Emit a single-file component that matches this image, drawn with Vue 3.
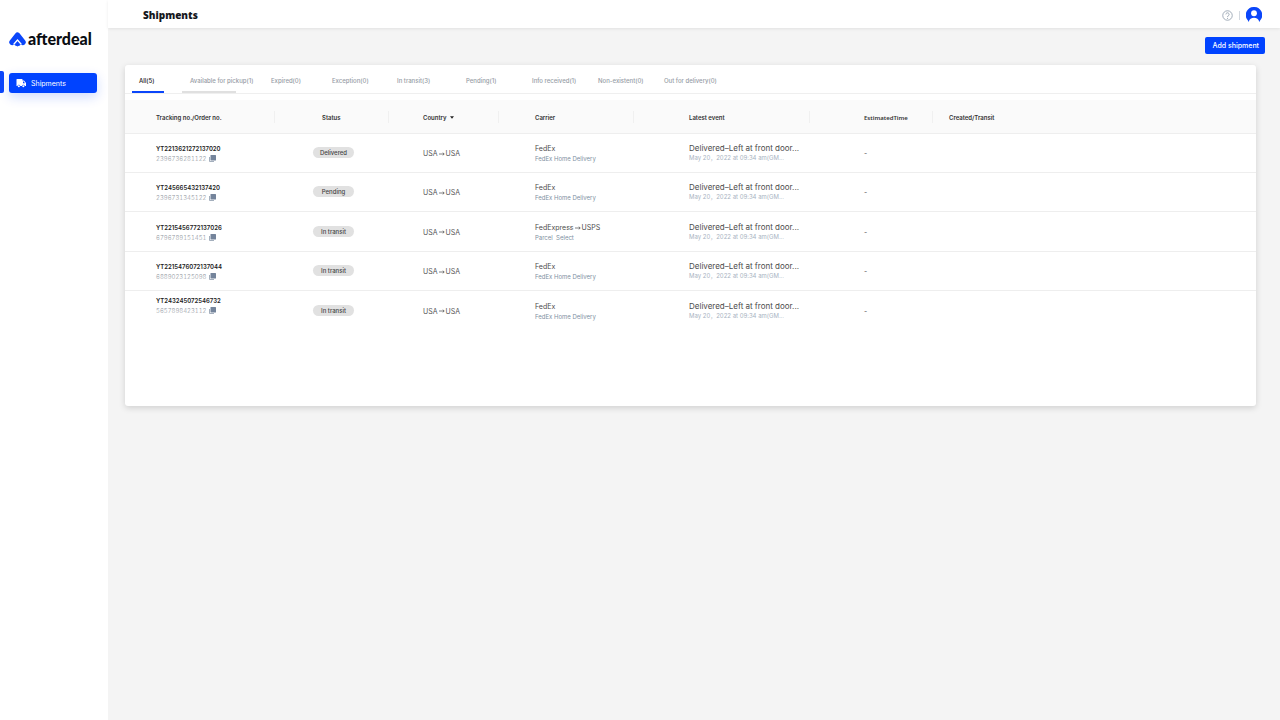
<script setup>
import { ref } from 'vue'

const tabs = [
  'All(5)',
  'Available for pickup(1)',
  'Expired(0)',
  'Exception(0)',
  'In transit(3)',
  'Pending(1)',
  'Info received(1)',
  'Non-existent(0)',
  'Out for delivery(0)',
]
const active = ref(0)

const home = { carrier: 'FedEx', service: 'FedEx Home Delivery' }
const rows = [
  { tracking: 'YT2213621272137020', order: '2396736281122', status: 'Delivered', ...home },
  { tracking: 'YT245665432137420', order: '2396731345122', status: 'Pending', ...home },
  {
    tracking: 'YT2215456772137026',
    order: '6796789151451',
    status: 'In transit',
    carrier: 'FedExpress',
    next: 'USPS',
    service: 'Parcel\u00a0 Select',
  },
  { tracking: 'YT2215476072137044', order: '6889023125098', status: 'In transit', ...home },
  { tracking: 'YT243245072546732', order: '5657898423112', status: 'In transit', ...home },
]
</script>

<template>
  <div class="app">
    <aside class="sidebar">
      <div class="logo">
        <svg class="logo-mark" viewBox="0 0 34 30" aria-hidden="true">
          <path d="M6 20.500 17 6.500 28 20.500" fill="none" stroke="#0b46fa" stroke-width="11" stroke-linecap="round" stroke-linejoin="round" />
          <path d="M9.500 24.500 17 16 24.500 24.500" fill="none" stroke="#fff" stroke-width="2.500" />
          <path d="M17 19 11.500 25.500Q17 30.500 22.500 25.500Z" fill="#0b46fa" stroke="#0b46fa" stroke-width="1.500" stroke-linejoin="round" />
        </svg>
        <span>afterdeal</span>
      </div>
      <nav class="nav">
        <a class="nav-link" href="#shipments">
          <svg class="truck" viewBox="0 0 20 20" aria-hidden="true">
            <path d="M2 2h10a1 1 0 0 1 1 1v2h3l4 5v6h-2.500a2.800 2.800 0 0 0-5.500 0H8.500a2.800 2.800 0 0 0-5.500 0H1V3a1 1 0 0 1 1-1z" fill="#fff" />
            <path d="M14 7v3.500h4L15.500 7z" fill="#0b46fa" />
            <circle cx="5.700" cy="16.500" r="2.100" fill="#fff" />
            <circle cx="14.700" cy="16.500" r="2.100" fill="#fff" />
          </svg>
          Shipments
        </a>
      </nav>
    </aside>

    <div class="body">
      <header class="topbar">
        <h1>Shipments</h1>
        <div class="tools">
          <button class="icon-btn" type="button" aria-label="Help">
            <svg class="help" viewBox="0 0 22 22" aria-hidden="true">
              <circle cx="11" cy="11" r="9.500" fill="none" stroke="#8c99a8" stroke-width="1.600" />
              <path d="M7.800 8.800a3.200 3.200 0 1 1 4.800 2.800c-1 .6-1.600 1.100-1.600 2.400" fill="none" stroke="#8c99a8" stroke-width="1.700" />
              <circle cx="11" cy="16.500" r="1.100" fill="#8c99a8" />
            </svg>
          </button>
          <span class="rule"></span>
          <button class="icon-btn" type="button" aria-label="Account">
            <svg class="avatar" viewBox="0 0 32 32" aria-hidden="true">
              <path d="M16 0a16 16 0 0 1 12.500 26.500L26.500 30C25.500 24 21 21.500 16 21.500S6.500 24 5.500 30L3.500 26.500A16 16 0 0 1 16 0z" fill="#0b46fa" />
              <circle cx="16" cy="12.500" r="5.800" fill="#fff" />
            </svg>
          </button>
        </div>
      </header>

      <main class="content">
        <div class="actions">
          <button class="add" type="button">Add shipment</button>
        </div>

        <section class="card">
          <div class="tabs" role="tablist">
            <button
              v-for="(tab, i) in tabs"
              :key="tab"
              class="tab"
              :class="{ active: active === i, marked: i === 1 }"
              type="button"
              role="tab"
              :aria-selected="active === i"
              @click="active = i"
            >{{ tab }}</button>
          </div>

          <table class="table">
            <colgroup>
              <col class="c-order" />
              <col class="c-status" />
              <col class="c-country" />
              <col class="c-carrier" />
              <col class="c-event" />
              <col class="c-time" />
              <col />
            </colgroup>
            <thead>
              <tr>
                <th class="order">Tracking no./Order no.</th>
                <th class="status">Status</th>
                <th class="country">
                  Country
                  <svg class="caret" viewBox="0 0 8 5" aria-hidden="true"><path d="M0 0h8L4 5z" fill="#222" /></svg>
                </th>
                <th class="carrier">Carrier</th>
                <th class="event">Latest event</th>
                <th class="time">EstimatedTime</th>
                <th class="created">Created/Transit</th>
              </tr>
            </thead>
            <tbody>
              <tr v-for="row in rows" :key="row.tracking" :class="{ multi: row.next }">
                <td class="order">
                  <div class="tracking">{{ row.tracking }}</div>
                  <div class="number">
                    {{ row.order }}
                    <button class="icon-btn" type="button" aria-label="Copy order number">
                      <svg class="copy" viewBox="0 0 14 14" aria-hidden="true">
                        <path d="M1 4v9h9" fill="none" stroke="#9aa6b6" stroke-width="1.800" />
                        <rect x="3" y="0" width="11" height="11" rx="1" fill="#74849b" />
                      </svg>
                    </button>
                  </div>
                </td>
                <td class="status"><span class="pill">{{ row.status }}</span></td>
                <td class="country">
                  <span class="route">USA
                    <svg class="arrow" viewBox="0 0 12 8" aria-hidden="true"><path d="M0 4h10M7.500 1.500 10.500 4 7.500 6.500" fill="none" stroke="#555" stroke-width="1.500" /></svg>
                    USA</span>
                </td>
                <td class="carrier">
                  <div class="main route">{{ row.carrier }}
                    <template v-if="row.next">
                      <svg class="arrow" viewBox="0 0 12 8" aria-hidden="true"><path d="M0 4h10M7.500 1.500 10.500 4 7.500 6.500" fill="none" stroke="#555" stroke-width="1.500" /></svg>
                      {{ row.next }}
                    </template>
                  </div>
                  <div class="sub">{{ row.service }}</div>
                </td>
                <td class="event">
                  <div class="main latest">Delivered–Left at front door...</div>
                  <div class="date">May 20，2022 at 09:34 am(GM...</div>
                </td>
                <td class="time">-</td>
                <td class="created"></td>
              </tr>
            </tbody>
          </table>
        </section>
      </main>
    </div>
  </div>
</template>

<style>
body {
  background: #f4f4f4;
}
</style>

<style scoped>
.app {
  display: flex;
  min-height: 100vh;
  background: #f4f4f4;
  font-family: Inter, "Noto Sans CJK SC", sans-serif;
  color: #333;
}
button {
  font: inherit;
  border: 0;
  padding: 0;
  background: none;
  cursor: pointer;
}
svg {
  display: block;
  flex: none;
}
.icon-btn {
  display: flex;
}

.sidebar {
  flex: none;
  width: 108px;
  background: #fff;
}
.logo {
  display: flex;
  align-items: center;
  gap: 2px;
  height: 20px;
  margin: 29px 0 0 9px;
  font: 900 16px/20px Lato, sans-serif;
  color: #0a0d12;
}
.logo-mark {
  width: 17px;
  height: 15px;
}
.nav {
  display: flex;
  margin-top: 22px;
  padding: 0 11px 0 0;
}
.nav::before {
  content: "";
  width: 4px;
  height: 22px;
  margin-right: 5px;
  border-radius: 0 2px 2px 0;
  background: #0b46fa;
}
.nav-link {
  flex: 1;
  display: flex;
  align-items: center;
  gap: 5px;
  height: 20px;
  margin-top: 2px;
  padding-left: 7px;
  border-radius: 3px;
  background: #0043ff;
  box-shadow: 0 4px 12px rgba(11, 70, 250, 0.2);
  color: #fff;
  font-size: 7px;
  text-decoration: none;
}
.truck {
  width: 10px;
  height: 10px;
}

.body {
  flex: 1;
  min-width: 0;
}
.topbar {
  display: flex;
  align-items: center;
  justify-content: space-between;
  height: 28px;
  padding: 2px 18px 0 35px;
  box-sizing: border-box;
  background: #fff;
  box-shadow: 0 1px 3px rgba(0, 0, 0, 0.08);
}
h1 {
  margin: 0;
  font: 800 10px/16px "Open Sans", sans-serif;
  color: #15171c;
}
.tools {
  display: flex;
  align-items: center;
  gap: 6px;
}
.help {
  width: 11px;
  height: 11px;
}
.rule {
  width: 1px;
  height: 9px;
  background: #d3d9e0;
}
.avatar {
  width: 16px;
  height: 16px;
}

.content {
  padding: 9px 15px 0 17px;
}
.actions {
  display: flex;
  justify-content: flex-end;
}
.add {
  height: 17px;
  padding: 0 6px 0 8px;
  border-radius: 2px;
  background: #0043ff;
  color: #fff;
  font-size: 7px;
  font-weight: 500;
}
.card {
  min-height: 341px;
  margin: 11px 9px 0 0;
  border-radius: 3px;
  background: #fff;
  box-shadow: 0 2px 6px rgba(0, 0, 0, 0.15);
}

.tabs {
  display: grid;
  grid-template-columns: 50px 82px 61px 65px 69px 66px 66px 66px 70px;
  height: 28px;
  padding-left: 7px;
  border-bottom: 1px solid #efefef;
}
.tab {
  position: relative;
  padding: 3px 0 0 7px;
  color: #969ca5;
  font-size: 6px;
  font-weight: 500;
  text-align: left;
  white-space: nowrap;
}
.tab.marked {
  padding-left: 8px;
}
.tab.active {
  color: #222;
}
.tab.active::after,
.tab.marked::after {
  content: "";
  position: absolute;
  left: 0;
  bottom: 0;
  width: 54px;
  height: 2px;
  background: #e0e0e0;
}
.tab.active::after {
  width: 32px;
  background: #0b46fa;
}

.table {
  width: 100%;
  margin-top: 6px;
  table-layout: fixed;
  border-collapse: separate;
  border-spacing: 0;
}
.c-order { width: 150px; }
.c-status { width: 114px; }
.c-country { width: 110px; }
.c-carrier { width: 135px; }
.c-event { width: 176px; }
.c-time { width: 123px; }
th,
td {
  box-sizing: border-box;
  padding: 0;
  text-align: left;
  white-space: nowrap;
  border-bottom: 1px solid #eee;
}
th {
  height: 34px;
  padding-top: 2px;
  background: linear-gradient(#f0f0f0, #f0f0f0) right center / 1px 12px no-repeat #fafafa;
  font-size: 6px;
  line-height: 8px;
  font-weight: 600;
}
th:last-child {
  background: #fafafa;
}
td {
  height: 39px;
  font-size: 7px;
  line-height: 9px;
}
.multi td {
  height: 40px;
}
tbody tr:last-child td {
  border-bottom: 0;
}
.order { padding-left: 31px; }
.status { padding-left: 38px; }
.country { padding-left: 34px; }
.carrier { padding-left: 36px; }
.event { padding-left: 55px; }
.time { padding-left: 54px; }
.created { padding-left: 16px; }
th.status { padding-left: 47px; }
th.time { font-family: "Noto Sans", sans-serif; }
.caret {
  display: inline-block;
  width: 4px;
  height: 3px;
  margin: 0 0 1px 2px;
}
td.order {
  padding-top: 1px;
}
td.carrier {
  padding-top: 2px;
}
.tracking {
  color: #222;
  font-size: 6px;
  line-height: 10px;
  font-weight: 600;
}
.number {
  display: flex;
  align-items: center;
  gap: 3px;
  color: #8f959d;
  font-weight: 300;
  font-size: 6px;
  font-variant-numeric: tabular-nums;
}
tbody tr:last-child .order {
  padding-bottom: 12px;
}
.copy {
  width: 7px;
  height: 7px;
}
td.status {
  padding-bottom: 1px;
}
.pill {
  display: block;
  width: 41px;
  border-radius: 6px;
  background: #e1e1e1;
  color: #444;
  font-size: 6px;
  line-height: 11px;
  font-weight: 500;
  text-align: center;
}
.route {
  display: flex;
  align-items: center;
  gap: 2px;
}
td .route {
  gap: 1px;
}
.arrow {
  width: 6px;
  height: 4px;
}
td.country,
td.time {
  padding-top: 1px;
  color: #555;
}
.main {
  color: #4c4c4c;
  line-height: 10px;
}
.latest {
  font-size: 8px;
}
.sub {
  color: #8090a2;
  font-size: 6px;
  line-height: 10px;
}
.date {
  color: #a9b3c2;
  font-size: 6px;
  line-height: 10px;
}
</style>
